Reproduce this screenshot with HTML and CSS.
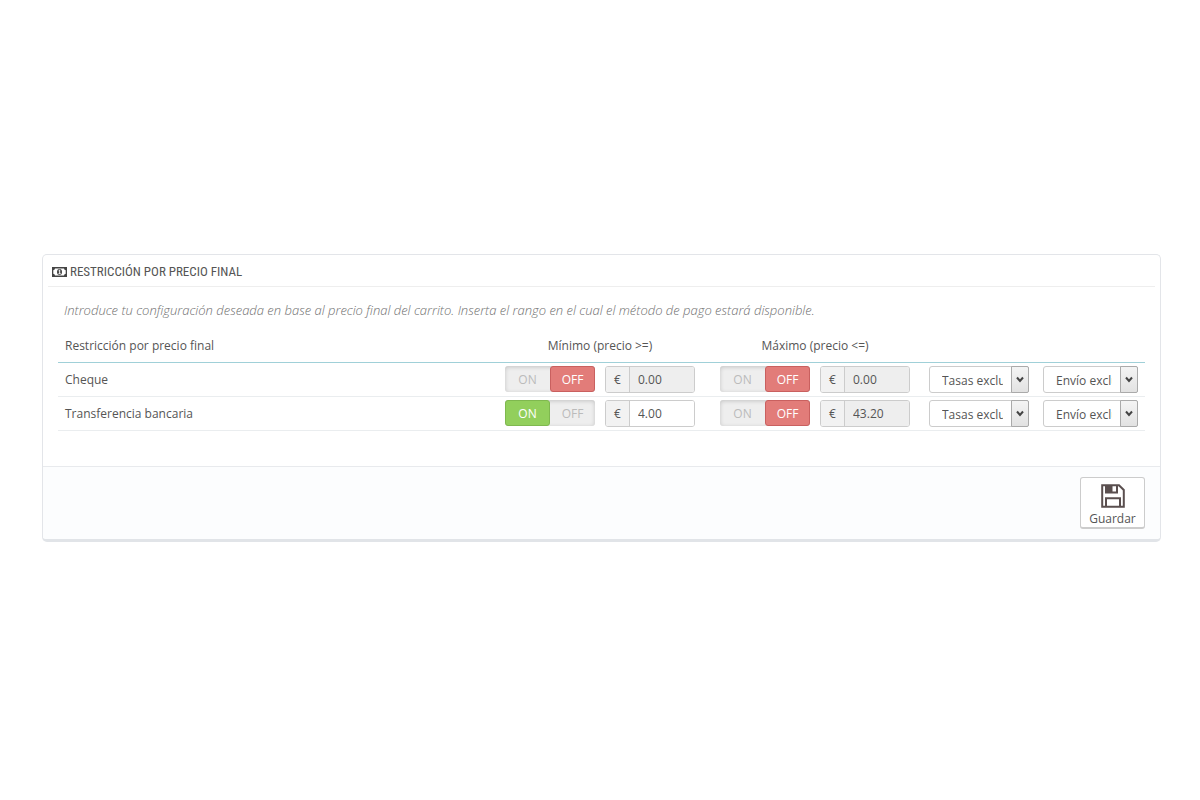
FILE: index.html
```html
<!DOCTYPE html>
<html lang="es">
<head>
    <meta charset="UTF-8">
    <meta name="viewport" content="width=device-width, initial-scale=1.0">
    <title>Restricción por precio final</title>
    <link rel="stylesheet" href="styles.css">
</head>
<body>
    <form class="panel">
        <h3 class="panel-heading">
            <svg class="icon-money" viewBox="0 0 15 10" aria-hidden="true">
                <path fill-rule="evenodd" d="M0 0h15v10H0zM3 1.500Q2.800 3 1.300 3.200v3.600Q2.800 7 3 8.500h9Q12.200 7 13.700 6.800V3.200Q12.200 3 12 1.500z"/>
                <ellipse cx="7.500" cy="5" rx="2.500" ry="2.900"/>
                <path class="coin" d="M6.700 3.700l1-.7v3.500M6.500 6.700h2.200"/>
            </svg>
            Restricción por precio final
        </h3>
        <div class="panel-body">
            <p class="help">Introduce tu configuración deseada en base al precio final del carrito. Inserta el rango en el cual el método de pago estará disponible.</p>
            <table class="table">
                <thead>
                    <tr>
                        <th class="col-name">Restricción por precio final</th>
                        <th class="col-min"><span class="range-title">Mínimo (precio &gt;=)</span></th>
                        <th class="col-max"><span class="range-title">Máximo (precio &lt;=)</span></th>
                        <th class="col-tax"></th>
                        <th class="col-shipping"></th>
                    </tr>
                </thead>
                <tbody>
                    <tr>
                        <td class="col-name">Cheque</td>
                        <td>
                            <div class="range">
                                <div class="switch">
                                    <input type="radio" name="cheque_min" id="cheque_min_on">
                                    <label class="on" for="cheque_min_on">ON</label>
                                    <input type="radio" name="cheque_min" id="cheque_min_off" checked>
                                    <label class="off" for="cheque_min_off">OFF</label>
                                </div>
                                <div class="input-group">
                                    <label class="addon" for="cheque_min_price">€</label>
                                    <input type="text" id="cheque_min_price" value="0.00" disabled>
                                </div>
                            </div>
                        </td>
                        <td>
                            <div class="range">
                                <div class="switch">
                                    <input type="radio" name="cheque_max" id="cheque_max_on">
                                    <label class="on" for="cheque_max_on">ON</label>
                                    <input type="radio" name="cheque_max" id="cheque_max_off" checked>
                                    <label class="off" for="cheque_max_off">OFF</label>
                                </div>
                                <div class="input-group">
                                    <label class="addon" for="cheque_max_price">€</label>
                                    <input type="text" id="cheque_max_price" value="0.00" disabled>
                                </div>
                            </div>
                        </td>
                        <td>
                            <div class="select">
                                <select aria-label="Tasas"><option>Tasas excluidas</option><option>Tasas incluidas</option></select>
                                <span class="arrow"><svg viewBox="0 0 8 7" aria-hidden="true"><path d="M1 1.500l3 3.500 3-3.500"/></svg></span>
                            </div>
                        </td>
                        <td>
                            <div class="select">
                                <select aria-label="Envío"><option>Envío excluido</option><option>Envío incluido</option></select>
                                <span class="arrow"><svg viewBox="0 0 8 7" aria-hidden="true"><path d="M1 1.500l3 3.500 3-3.500"/></svg></span>
                            </div>
                        </td>
                    </tr>
                    <tr>
                        <td class="col-name">Transferencia bancaria</td>
                        <td>
                            <div class="range">
                                <div class="switch">
                                    <input type="radio" name="bank_min" id="bank_min_on" checked>
                                    <label class="on" for="bank_min_on">ON</label>
                                    <input type="radio" name="bank_min" id="bank_min_off">
                                    <label class="off" for="bank_min_off">OFF</label>
                                </div>
                                <div class="input-group">
                                    <label class="addon" for="bank_min_price">€</label>
                                    <input type="text" id="bank_min_price" value="4.00">
                                </div>
                            </div>
                        </td>
                        <td>
                            <div class="range">
                                <div class="switch">
                                    <input type="radio" name="bank_max" id="bank_max_on">
                                    <label class="on" for="bank_max_on">ON</label>
                                    <input type="radio" name="bank_max" id="bank_max_off" checked>
                                    <label class="off" for="bank_max_off">OFF</label>
                                </div>
                                <div class="input-group">
                                    <label class="addon" for="bank_max_price">€</label>
                                    <input type="text" id="bank_max_price" value="43.20" disabled>
                                </div>
                            </div>
                        </td>
                        <td>
                            <div class="select">
                                <select aria-label="Tasas"><option>Tasas excluidas</option><option>Tasas incluidas</option></select>
                                <span class="arrow"><svg viewBox="0 0 8 7" aria-hidden="true"><path d="M1 1.500l3 3.500 3-3.500"/></svg></span>
                            </div>
                        </td>
                        <td>
                            <div class="select">
                                <select aria-label="Envío"><option>Envío excluido</option><option>Envío incluido</option></select>
                                <span class="arrow"><svg viewBox="0 0 8 7" aria-hidden="true"><path d="M1 1.500l3 3.500 3-3.500"/></svg></span>
                            </div>
                        </td>
                    </tr>
                </tbody>
            </table>
        </div>
        <div class="panel-footer">
            <button type="submit" class="save">
                <svg class="icon-save" viewBox="0 0 24 24" aria-hidden="true">
                    <path class="line" d="M1.200 1.200H18L22.800 6v16.800H1.200zM5 22.500V14.200h14v8.300M5 1.500v7h11v-7"/>
                    <path d="M5 1h6.500v7H5z"/>
                </svg>
                Guardar
            </button>
        </div>
    </form>
</body>
</html>
```
FILE: styles.css
```css
* {
    box-sizing: border-box;
}
body {
    margin: 0;
    padding: 254px 39px 40px 42px;
    background: #fff;
    color: #555;
    font-family: "Open Sans", sans-serif;
    font-size: 12px;
    line-height: 18px;
}
.panel {
    border: 1px solid #e3e5e9;
    border-bottom: 3px solid #e1e4e8;
    border-radius: 5px;
    background: #fff;
}
.panel-heading {
    display: flex;
    align-items: center;
    gap: 3px;
    height: 32px;
    margin: 0 5px;
    padding: 2px 4px 0;
    border-bottom: 1px solid #eee;
    font-family: "Ubuntu Condensed", "Roboto Condensed", "Liberation Sans Narrow", "Open Sans Condensed", sans-serif;
    font-size: 13px;
    font-weight: normal;
    text-transform: uppercase;
}
.icon-money {
    width: 15px;
    height: 10px;
    fill: #444;
}
.icon-money .coin {
    fill: none;
    stroke: #fff;
    stroke-width: 1;
}
.panel-body {
    padding: 14px 15px 35px;
}
.help {
    margin: 0 0 10px;
    padding-left: 6px;
    color: #707070;
    font-size: 13px;
    font-style: italic;
    font-weight: 300;
}
.table {
    width: 100%;
    border-collapse: collapse;
    table-layout: fixed;
}
th,
td {
    height: 34px;
    padding: 0 7px;
    border-bottom: 1px solid #eaedef;
    text-align: left;
}
th {
    height: 33px;
    padding-top: 2px;
    border-bottom-color: #a0d0d8;
    font-weight: normal;
}
.col-name {
    padding-top: 2px;
}
.col-min {
    width: 215px;
}
.col-max {
    width: 209px;
}
.col-tax {
    width: 114px;
}
.col-shipping {
    width: 109px;
}
.range-title {
    display: block;
    width: 190px;
    text-align: center;
}
.range {
    display: flex;
    gap: 10px;
    width: 190px;
}
.switch {
    position: relative;
    display: flex;
    width: 90px;
    height: 26px;
    border-radius: 3px;
    background: #eee;
    box-shadow: inset 0 1px 4px rgba(0, 0, 0, 0.18);
}
.switch input {
    position: absolute;
    opacity: 0;
}
.switch label {
    flex: 1;
    border: 1px solid transparent;
    border-radius: 3px;
    color: #bbb;
    line-height: 25px;
    text-align: center;
    cursor: pointer;
}
.switch input:checked + label {
    color: #fff;
}
.switch input:checked + .on {
    border-color: #7fb84f;
    background: #92cf5c;
}
.switch input:checked + .off {
    border-color: #c9605f;
    background: #e27c79;
}
.input-group {
    display: flex;
    width: 90px;
    height: 27px;
    border: 1px solid #ccc;
    border-radius: 3px;
    overflow: hidden;
}
.addon {
    width: 24px;
    border-right: 1px solid #ccc;
    background: #f2f2f2;
    line-height: 25px;
    text-align: center;
}
.input-group input {
    flex: 1;
    min-width: 0;
    padding: 2px 8px 0;
    border: 0;
    background: #fff;
    color: #555;
    font: inherit;
}
.input-group input:disabled {
    background: #eee;
}
.select {
    position: relative;
    height: 27px;
}
.select select {
    width: 100%;
    height: 27px;
    padding: 4px 25px 0 12px;
    border: 1px solid #ccc;
    border-radius: 3px;
    background: #fff;
    color: #555;
    font: inherit;
    appearance: none;
}
.arrow {
    position: absolute;
    top: 0;
    right: 0;
    display: flex;
    align-items: center;
    justify-content: center;
    width: 18px;
    height: 27px;
    border: 1px solid #aaa;
    border-radius: 0 2px 2px 0;
    background: linear-gradient(#f4f4f4, #e2e2e2);
    pointer-events: none;
}
.arrow svg {
    width: 8px;
    height: 7px;
    fill: none;
    stroke: #444;
    stroke-width: 2;
}
.panel-footer {
    display: flex;
    justify-content: flex-end;
    padding: 10px 15px;
    border-top: 1px solid #e8eaed;
    border-radius: 0 0 4px 4px;
    background: #fcfdfe;
}
.save {
    display: flex;
    flex-direction: column;
    align-items: center;
    gap: 2px;
    min-width: 65px;
    height: 52px;
    padding: 6px 8px 0;
    border: 1px solid #ccc;
    border-bottom-width: 2px;
    border-radius: 3px;
    background: #fff;
    color: #555;
    font: inherit;
    cursor: pointer;
}
.icon-save {
    width: 24px;
    height: 24px;
    flex: none;
    fill: #5a4f4f;
}
.icon-save .line {
    fill: none;
    stroke: #5a4f4f;
    stroke-width: 2;
}
```
